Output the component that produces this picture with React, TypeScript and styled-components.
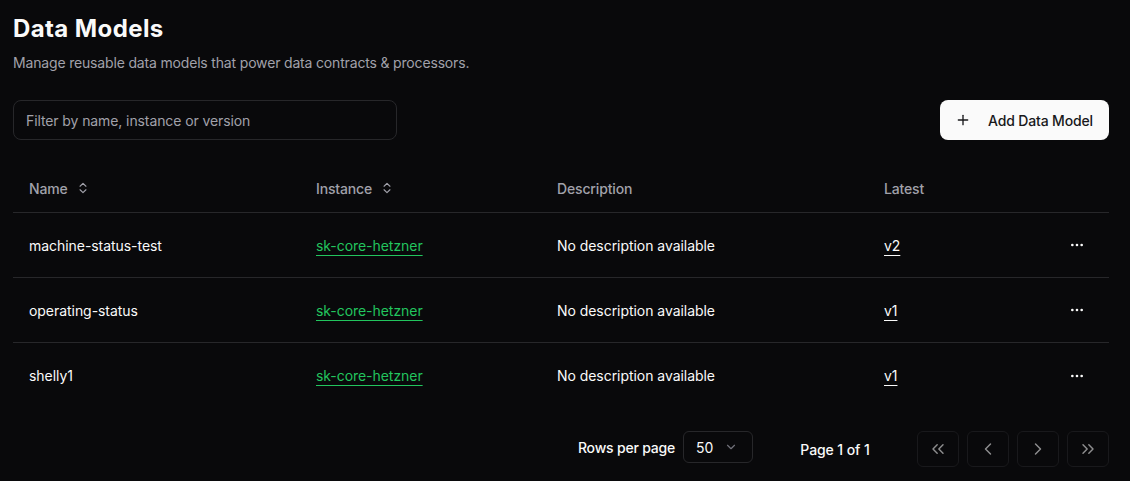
import React from "react";
import styled, { createGlobalStyle } from "styled-components";
import {
  ChevronsUpDown,
  Plus,
  MoreHorizontal,
  ChevronDown,
  ChevronsLeft,
  ChevronLeft,
  ChevronRight,
  ChevronsRight,
} from "lucide-react";

const Global = createGlobalStyle`
  html, body { margin: 0; padding: 0; background: #09090b; }
  body { font-family: Inter, "Noto Sans", sans-serif; color: #fafafa; -webkit-font-smoothing: antialiased; }
  * { box-sizing: border-box; }
`;

const Page = styled.div`
  padding: 13px 21px 13px 13px;
  min-height: 481px;
  background: #09090b;
`;

const Title = styled.h1`
  margin: 0;
  font-size: 24px;
  line-height: 32px;
  font-weight: 700;
  letter-spacing: 0.4px;
  color: #fafafa;
`;

const Subtitle = styled.p`
  margin: 8px 0 0;
  font-size: 14px;
  line-height: 20px;
  letter-spacing: -0.17px;
  color: #a1a1aa;
`;

const Toolbar = styled.div`
  margin-top: 27px;
  display: flex;
  justify-content: space-between;
  align-items: center;
`;

const FilterInput = styled.input`
  width: 384px;
  height: 40px;
  border: 1px solid #27272a;
  border-radius: 8px;
  background: transparent;
  padding: 0 12px;
  font-family: inherit;
  font-size: 14px;
  letter-spacing: -0.1px;
  color: #fafafa;
  outline: none;
  &::placeholder { color: #a1a1aa; }
`;

const PrimaryButton = styled.button`
  height: 40px;
  display: flex;
  align-items: center;
  gap: 17px;
  padding: 0 16px 0 15px;
  border: none;
  border-radius: 8px;
  background: #fafafa;
  color: #18181b;
  font-family: inherit;
  font-size: 14px;
  font-weight: 500;
  letter-spacing: -0.15px;
  white-space: nowrap;
  flex-shrink: 0;
`;

const Table = styled.div`
  margin-top: 24px;
  width: 1096px;
`;

const Row = styled.div<{ $header?: boolean; $last?: boolean }>`
  display: grid;
  grid-template-columns: 287px 241px 327px 177px 64px;
  align-items: center;
  height: ${(p) => (p.$header ? "49px" : "65px")};
  border-bottom: ${(p) => (p.$last ? "none" : "1px solid #27272a")};
`;

const HeadCell = styled.div`
  padding: 0 16px;
  display: flex;
  align-items: center;
  gap: 8px;
  font-size: 14px;
  font-weight: 500;
  letter-spacing: -0.15px;
  color: #a1a1aa;
`;

const Cell = styled.div<{ $center?: boolean }>`
  padding: 0 16px;
  font-size: 14px;
  font-weight: 400;
  letter-spacing: -0.05px;
  color: #fafafa;
  display: flex;
  align-items: center;
  justify-content: ${(p) => (p.$center ? "center" : "flex-start")};
`;

const Link = styled.a<{ $green?: boolean }>`
  color: ${(p) => (p.$green ? "#22c55e" : "#fafafa")};
  text-decoration: underline;
  text-underline-offset: 4px;
  text-decoration-thickness: 1px;
  cursor: pointer;
`;

const IconButton = styled.button`
  background: transparent;
  border: none;
  padding: 0;
  color: #fafafa;
  display: flex;
`;

const Pagination = styled.div`
  margin-top: 23px;
  width: 1096px;
  display: flex;
  justify-content: flex-end;
  align-items: center;
  gap: 32px;
`;

const RowsGroup = styled.div`
  display: flex;
  align-items: center;
  gap: 8px;
  font-size: 14px;
  font-weight: 500;
  letter-spacing: -0.2px;
  margin-top: -4px;
`;

const SelectBox = styled.div`
  width: 70px;
  height: 32px;
  border: 1px solid #27272a;
  border-radius: 6px;
  display: flex;
  align-items: center;
  justify-content: space-between;
  padding: 0 14px 0 12px;
  font-size: 14px;
  font-weight: 400;
  letter-spacing: 0;
  color: #fafafa;
  svg { color: #71717a; }
`;

const PageInfo = styled.div`
  width: 100px;
  text-align: center;
  font-size: 14px;
  font-weight: 500;
  letter-spacing: -0.1px;
`;

const NavGroup = styled.div`
  display: flex;
  gap: 8px;
`;

const NavButton = styled.button`
  width: 42px;
  height: 36px;
  border: 1px solid #27272a;
  border-radius: 6px;
  background: transparent;
  color: #fafafa;
  opacity: 0.55;
  display: flex;
  align-items: center;
  justify-content: center;
  padding: 0;
`;

const rows = [
  { name: "machine-status-test", instance: "sk-core-hetzner", desc: "No description available", latest: "v2" },
  { name: "operating-status", instance: "sk-core-hetzner", desc: "No description available", latest: "v1" },
  { name: "shelly1", instance: "sk-core-hetzner", desc: "No description available", latest: "v1" },
];

export default function App() {
  return (
    <Page>
      <Global />
      <Title>Data Models</Title>
      <Subtitle>Manage reusable data models that power data contracts &amp; processors.</Subtitle>
      <Toolbar>
        <FilterInput placeholder="Filter by name, instance or version" />
        <PrimaryButton>
          <Plus size={16} strokeWidth={2} />
          Add Data Model
        </PrimaryButton>
      </Toolbar>
      <Table>
        <Row $header>
          <HeadCell>
            Name <ChevronsUpDown size={14} />
          </HeadCell>
          <HeadCell>
            Instance <ChevronsUpDown size={14} />
          </HeadCell>
          <HeadCell>Description</HeadCell>
          <HeadCell>Latest</HeadCell>
          <HeadCell />
        </Row>
        {rows.map((r, i) => (
          <Row key={r.name} $last={i === rows.length - 1}>
            <Cell>{r.name}</Cell>
            <Cell>
              <Link $green>{r.instance}</Link>
            </Cell>
            <Cell>{r.desc}</Cell>
            <Cell>
              <Link>{r.latest}</Link>
            </Cell>
            <Cell $center>
              <IconButton>
                <MoreHorizontal size={16} />
              </IconButton>
            </Cell>
          </Row>
        ))}
      </Table>
      <Pagination>
        <RowsGroup>
          Rows per page
          <SelectBox>
            50 <ChevronDown size={14} />
          </SelectBox>
        </RowsGroup>
        <PageInfo>Page 1 of 1</PageInfo>
        <NavGroup>
          <NavButton><ChevronsLeft size={20} strokeWidth={1.75} /></NavButton>
          <NavButton><ChevronLeft size={20} strokeWidth={1.75} /></NavButton>
          <NavButton><ChevronRight size={20} strokeWidth={1.75} /></NavButton>
          <NavButton><ChevronsRight size={20} strokeWidth={1.75} /></NavButton>
        </NavGroup>
      </Pagination>
    </Page>
  );
}
